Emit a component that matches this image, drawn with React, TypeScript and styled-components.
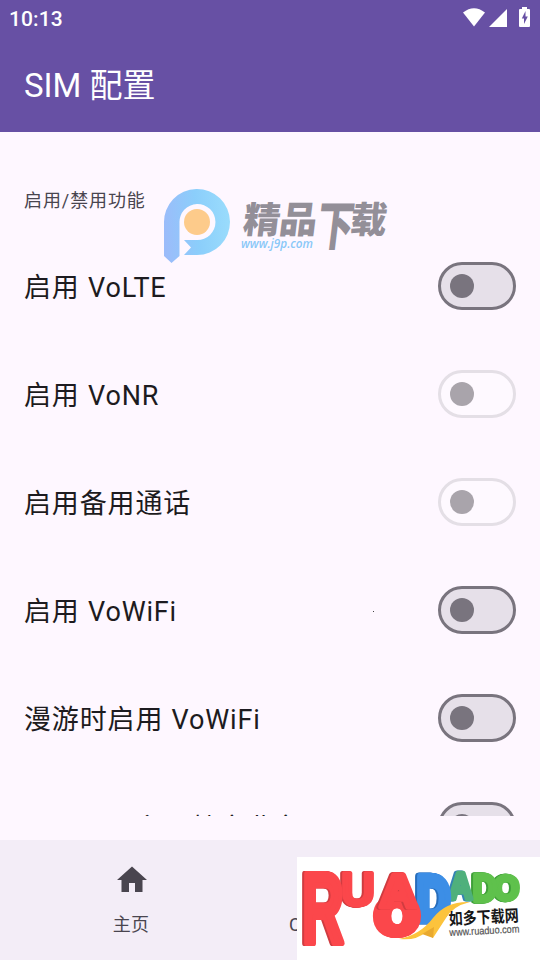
import React from 'react';
import styled, { createGlobalStyle, css } from 'styled-components';

const GlobalStyles = createGlobalStyle`
  * {
    box-sizing: border-box;
  }

  body {
    margin: 0;
    background: #fef7ff;
    font-family: Roboto, 'Noto Sans CJK SC', sans-serif;
  }
`;

const Screen = styled.div`
  position: relative;
  display: flex;
  flex-direction: column;
  width: 540px;
  height: 960px;
  overflow: hidden;
  background: #fef7ff;
  color: #1d1b20;
`;

const Header = styled.header`
  flex: none;
  height: 132px;
  background: #6750a4;
  color: #fff;
`;

const StatusBar = styled.div`
  display: flex;
  align-items: center;
  justify-content: space-between;
  height: 36px;
  padding: 2px 8px 0 9px;
  font-size: 21px;
  font-weight: 500;
  letter-spacing: 0.1px;
`;

const Title = styled.h1`
  display: flex;
  align-items: center;
  height: 96px;
  margin: 0;
  padding: 0 24px 2px;
  font-size: 33px;
  font-weight: 400;
`;

const Content = styled.main`
  flex: none;
  height: 684px;
  margin-bottom: 24px;
  padding: 0 24px;
  overflow: hidden;
`;

const SectionTitle = styled.h2`
  height: 100px;
  margin: 0;
  padding-top: 55px;
  font-size: 18px;
  font-weight: 400;
  line-height: 27px;
  letter-spacing: 0.9px;
  color: #49454f;
`;

const Row = styled.div`
  display: flex;
  align-items: center;
  justify-content: space-between;
  height: 108px;

  &:last-child > :first-child {
    padding-bottom: 0;
  }
`;

const Label = styled.span`
  padding-bottom: 2px;
  font-size: 27px;
  letter-spacing: 0.85px;
  word-spacing: 0.7px;
  white-space: nowrap;
`;

const Toggle = styled.span<{ $disabled?: boolean }>`
  display: flex;
  align-items: center;
  width: 78px;
  height: 48px;
  padding-left: 9px;
  border: 3px solid #79747e;
  border-radius: 24px;
  background: #e6e0e9;

  &::before {
    content: '';
    width: 24px;
    height: 24px;
    border-radius: 50%;
    background: #79747e;
  }

  ${p =>
    p.$disabled &&
    css`
      border-color: #e4dfe6;
      background: #fef9ff;

      &::before {
        background: #a9a4ab;
      }
    `}
`;

const NavBar = styled.nav`
  display: grid;
  flex: none;
  grid-template-columns: 1fr 1fr;
  gap: 12px;
  height: 120px;
  background: #f3edf7;
`;

const NavItem = styled.div`
  display: flex;
  flex-direction: column;
  align-items: center;
  padding-top: 22px;
  color: #49454f;
  font-size: 18px;
  line-height: 27px;
  letter-spacing: 0.3px;

  & > svg {
    margin-bottom: 13px;
  }

  & > span {
    padding-right: 2px;
  }
`;

const CarrierItem = styled(NavItem)`
  align-items: flex-start;
  padding-top: 71px;
  padding-left: 13px;
`;

const SiteLogo = styled.svg`
  position: absolute;
  top: 180px;
  left: 155px;
`;

const CornerLogo = styled.svg`
  position: absolute;
  right: 0;
  bottom: 0;
  background: #fff;
`;

const Block = styled.g<{ $side: string }>`
  filter: drop-shadow(-1px 0.5px 0 ${p => p.$side}) drop-shadow(-1px 0.5px 0 ${p => p.$side});
`;

const Speck = styled.i`
  position: absolute;
  top: 611px;
  left: 373px;
  width: 1px;
  height: 1px;
  background: #444;
`;

const StatusIcons = () => (
  <svg width="72" height="36" viewBox="460 1 72 36" fill="#fff">
    <path d="M463 12.5Q474 4 485 12.5L474 26.5Z" />
    <path d="M489 27L507 9V27Z" />
    <path
      fillRule="evenodd"
      d="M522 7h5v2h2q1 0 1 1v16q0 1-1 1h-9q-1 0-1-1V10q0-1 1-1h2ZM525.5 11l-3.7 7.5h2.2V24l3.8-7.5h-2.3Z"
    />
  </svg>
);

const HomeIcon = () => (
  <svg width="36" height="36" viewBox="0 0 24 24" fill="currentColor">
    <path d="M10 20v-6h4v6h5v-8h3L12 3 2 12h3v8z" />
  </svg>
);

const watermark = [
  { char: '精', x: 242, y: 232.5, sx: 0.37, sy: 0.365 },
  { char: '品', x: 278, y: 232.5, sx: 0.38, sy: 0.37 },
  { char: '下', x: 315, y: 245, sx: 0.365, sy: 0.53 },
  { char: '载', x: 349, y: 232.5, sx: 0.365, sy: 0.365 },
];

const Watermark = () => (
  <SiteLogo width="240" height="90" viewBox="155 180 240 90">
    <defs>
      <linearGradient id="pin" x1="0" y1="0.5" x2="1" y2="0.4">
        <stop offset="0" stopColor="#9bbcfa" />
        <stop offset="0.5" stopColor="#8bcefb" />
        <stop offset="1" stopColor="#9adcfc" />
      </linearGradient>
    </defs>
    <path
      fill="url(#pin)"
      d="M164 256V223A33 33 0 1 1 197 255H184L191 247.5L184 240H197A18 18 0 1 0 179.500 223V256L171.500 263Z"
    />
    <circle cx="197" cy="222" r="13" fill="#fdcb8b" />
    <g
      fill="#938f98"
      fontFamily="'Noto Sans CJK SC', sans-serif"
      fontWeight="900"
      fontSize="100"
    >
      {watermark.map(({ char, x, y, sx, sy }) => (
        <text key={char} transform={`translate(${x} ${y}) skewX(-7) scale(${sx} ${sy})`}>
          {char}
        </text>
      ))}
    </g>
    <text
      x="241"
      y="248"
      textLength="72"
      lengthAdjust="spacingAndGlyphs"
      fill="#8ac8f8"
      fontFamily="'Open Sans', sans-serif"
      fontStyle="italic"
      fontWeight="600"
      fontSize="13"
    >
      www.j9p.com
    </text>
  </SiteLogo>
);

// x and y are the left end of the baseline, w and h the size of the capital
const letters = [
  { char: 'O', x: 494, y: 900, w: 24, h: 24, face: '#5fc14c', side: '#3f9f39', weight: 13 },
  { char: 'D', x: 473, y: 901, w: 24, h: 26, face: '#5fc14c', side: '#3f9f39', weight: 13 },
  { char: 'A', x: 449, y: 899, w: 24, h: 25, face: '#4fb07c', side: '#3483b5', weight: 13 },
  { char: 'D', x: 417, y: 920, w: 34, h: 44, face: '#3c8ee6', side: '#276dbb', weight: 13 },
  { char: 'U', x: 341, y: 906, w: 35, h: 33, face: '#fb474b', side: '#d03c40', weight: 7 },
  { char: 'O', x: 377, y: 934, w: 40, h: 34, face: '#fb474b', side: '#fb474b', weight: 16 },
  { char: 'A', x: 380, y: 907, w: 38, h: 32, face: '#fb474b', side: '#d03c40', weight: 12 },
  { char: 'R', x: 302, y: 943, w: 43, h: 69, face: '#fb474b', side: '#d03c40', weight: 6 },
];

const RuadadoLogo = () => (
  <CornerLogo width="243" height="103" viewBox="297 857 243 103">
    <g
      fontFamily="'Liberation Sans', sans-serif"
      fontWeight="700"
      fontSize="100"
      strokeLinejoin="round"
    >
      {letters.map(({ char, x, y, w, h, face, side, weight }) => (
        <Block key={`${char}${x}`} $side={side}>
          <text
            transform={`translate(${x} ${y}) scale(${w / 74} ${h / 69})`}
            fill={face}
            stroke={face}
            strokeWidth={weight}
          >
            {char}
          </text>
        </Block>
      ))}
    </g>
    <path
      fill="#fcc33c"
      d="M399 939Q420 935 433 918Q446 901 470 902Q453 906 446 918L433 938L426 932Q416 941 399 939Z"
    />
    <path fill="#e9a92f" d="M422 934L434 927L433 938Z" />
    <g transform="rotate(-3 449 925)">
      <text
        x="449"
        y="925"
        textLength="70"
        lengthAdjust="spacingAndGlyphs"
        fontFamily="'Noto Sans CJK SC', sans-serif"
        fontWeight="700"
        fontSize="16.500"
        fill="#171717"
      >
        如多下载网
      </text>
      <text
        x="449"
        y="936"
        textLength="70"
        lengthAdjust="spacingAndGlyphs"
        fontFamily="'Liberation Sans', sans-serif"
        fontSize="10.500"
        fill="#555"
        stroke="#555"
        strokeWidth="0.2"
      >
        www.ruaduo.com
      </text>
    </g>
  </CornerLogo>
);

const features = [
  { label: '启用 VoLTE' },
  { label: '启用 VoNR', disabled: true },
  { label: '启用备用通话', disabled: true },
  { label: '启用 VoWiFi' },
  { label: '漫游时启用 VoWiFi' },
  { label: '用用用用主用特定业务' },
];

const App = () => (
  <>
    <GlobalStyles />
    <Screen lang="zh-CN">
      <Header>
        <StatusBar>
          <span>10:13</span>
          <StatusIcons />
        </StatusBar>
        <Title>SIM 配置</Title>
      </Header>
      <Content>
        <SectionTitle>启用/禁用功能</SectionTitle>
        {features.map(({ label, disabled }) => (
          <Row key={label}>
            <Label>{label}</Label>
            <Toggle $disabled={disabled} />
          </Row>
        ))}
      </Content>
      <NavBar>
        <NavItem>
          <HomeIcon />
          <span>主页</span>
        </NavItem>
        <CarrierItem>C</CarrierItem>
      </NavBar>
      <Watermark />
      <Speck />
      <RuadadoLogo />
    </Screen>
  </>
);

export default App;
